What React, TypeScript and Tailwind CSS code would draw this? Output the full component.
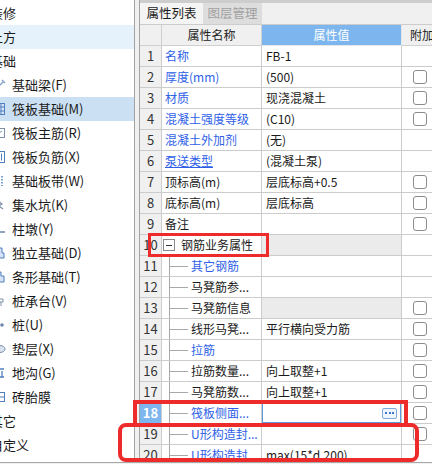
import React from "react";

type TreeItem = {
  label: string;
  level: 0 | 1;
  icon?: string;
  hover?: boolean;
  selected?: boolean;
};

const tree: TreeItem[] = [
  { label: "装修", level: 0 },
  { label: "土方", level: 0, hover: true },
  { label: "基础", level: 0 },
  { label: "基础梁(F)", level: 1, icon: "beam" },
  { label: "筏板基础(M)", level: 1, icon: "raft", selected: true },
  { label: "筏板主筋(R)", level: 1, icon: "main" },
  { label: "筏板负筋(X)", level: 1, icon: "neg" },
  { label: "基础板带(W)", level: 1, icon: "strip" },
  { label: "集水坑(K)", level: 1, icon: "pit" },
  { label: "柱墩(Y)", level: 1, icon: "pier" },
  { label: "独立基础(D)", level: 1, icon: "iso" },
  { label: "条形基础(T)", level: 1, icon: "bar" },
  { label: "桩承台(V)", level: 1, icon: "cap" },
  { label: "桩(U)", level: 1, icon: "pile" },
  { label: "垫层(X)", level: 1, icon: "pad" },
  { label: "地沟(G)", level: 1, icon: "ditch" },
  { label: "砖胎膜", level: 1, icon: "brick" },
  { label: "其它", level: 0 },
  { label: "自定义", level: 0 },
];

type Row = {
  name: string;
  value?: string;
  blue?: boolean;
  link?: boolean;
  check?: boolean;
  child?: boolean;
  group?: boolean;
  gray?: boolean;
  edit?: boolean;
};

const rows: Row[] = [
  { name: "名称", value: "FB-1", blue: true },
  { name: "厚度(mm)", value: "(500)", blue: true, check: true },
  { name: "材质", value: "现浇混凝土", blue: true, check: true },
  { name: "混凝土强度等级", value: "(C10)", blue: true, check: true },
  { name: "混凝土外加剂", value: "(无)", blue: true },
  { name: "泵送类型", value: "(混凝土泵)", blue: true, link: true },
  { name: "顶标高(m)", value: "层底标高+0.5", check: true },
  { name: "底标高(m)", value: "层底标高", check: true },
  { name: "备注", check: true },
  { name: "钢筋业务属性", group: true, gray: true },
  { name: "其它钢筋", child: true, blue: true },
  { name: "马凳筋参...", child: true },
  { name: "马凳筋信息", child: true, gray: true, check: true },
  { name: "线形马凳...", value: "平行横向受力筋", child: true, check: true },
  { name: "拉筋", child: true, blue: true, check: true },
  { name: "拉筋数量...", value: "向上取整+1", child: true, check: true },
  { name: "马凳筋数...", value: "向上取整+1", child: true, check: true },
  { name: "筏板侧面...", child: true, blue: true, check: true, edit: true },
  { name: "U形构造封...", child: true, blue: true, check: true },
  { name: "U形构造封...", value: "max(15*d,200)", child: true, blue: true },
];

function TreeIcon({ kind }: { kind?: string }) {
  const c = "#4f7fbf";
  return (
    <svg width="14" height="14" viewBox="0 0 14 14" className="shrink-0 ml-[-8px]">
      {kind === "beam" && <path d="M3 12 L12 3 M10 2 L13 5" stroke="#8aa6cc" strokeWidth="1.5" fill="none" />}
      {kind === "raft" && (
        <g stroke={c} fill="#dbe7f6">
          <rect x="1.5" y="1.5" width="11" height="11" />
          <path d="M5 1.5V12.5M9 1.5V12.5M1.5 5H12.5M1.5 9H12.5" fill="none" />
        </g>
      )}
      {kind === "main" && (
        <g stroke="#7d8fa8" fill="none">
          <rect x="1.5" y="2.5" width="11" height="9" />
          <path d="M4 9L10 5" />
        </g>
      )}
      {kind === "neg" && (
        <g stroke={c} fill="none">
          <rect x="1.5" y="1.5" width="11" height="11" />
          <path d="M9.5 3.5V10.5" />
        </g>
      )}
      {kind === "strip" && <path d="M10 2V12" stroke={c} strokeDasharray="1.5 1.5" strokeWidth="1.5" />}
      {kind === "pit" && <path d="M6 3L10 6L7 8L11 11" stroke="#7d8fa8" strokeWidth="1.3" fill="none" />}
      {kind === "pier" && <path d="M7 4V10H13" stroke="#6c87ad" strokeWidth="1.5" fill="none" />}
      {kind === "iso" && <path d="M4 2H10V7H12V12H4Z" stroke={c} fill="#d6e4f5" />}
      {kind === "bar" && <path d="M3 2H9V6H12V12H3Z" stroke={c} fill="#d6e4f5" />}
      {kind === "cap" && <path d="M6 5H11V8H6Z M9 8V12" stroke="#7d8fa8" fill="none" />}
      {kind === "pile" && <circle cx="10" cy="7" r="1.8" fill="#6c87ad" />}
      {kind === "pad" && <ellipse cx="8" cy="7" rx="5" ry="3.5" stroke="#7d8fa8" fill="#d9e2ee" />}
      {kind === "ditch" && <path d="M3 3H12M5 3V11H12M3 11H12M10 5V11" stroke={c} strokeWidth="1.3" fill="none" />}
      {kind === "brick" && (
        <g stroke={c} fill="none">
          <rect x="1.5" y="2.5" width="11" height="9" />
          <path d="M7 2.5V11.5M1.5 7H12.5" />
        </g>
      )}
    </svg>
  );
}

function LeftTree() {
  return (
    <div className="w-[135px] shrink-0 bg-white border-r border-[#a3a3a3] pt-[1px] overflow-hidden text-[13px] text-[#1a1a1a]">
      {tree.map((it, i) => (
        <div
          key={i}
          className={`h-[24px] flex items-center whitespace-nowrap ${
            it.selected ? "bg-[#cce0f4]" : it.hover ? "bg-[#e5f1fb]" : ""
          }`}
        >
          {it.level === 0 ? (
            <span className="ml-[-10px]">{it.label}</span>
          ) : (
            <>
              <TreeIcon kind={it.icon} />
              <span className="ml-[6px]">{it.label}</span>
            </>
          )}
        </div>
      ))}
    </div>
  );
}

function Checkbox() {
  return <span className="ml-[11px] w-[14px] h-[14px] rounded-[3px] border border-[#8c8c8c] bg-white" />;
}

function PropRow({ row, index }: { row: Row; index: number }) {
  const num = index + 1;
  return (
    <div className="h-[21px] flex shrink-0">
      <div
        className={`w-[22px] shrink-0 flex items-center justify-center border-r border-b border-[#cccccc] text-[13px] ${
          row.edit ? "bg-[#7db6ee] text-white font-bold" : "bg-[#f0f0f0] text-[#333]"
        }`}
      >
        {num}
      </div>
      <div className="w-[100px] shrink-0 flex items-center border-r border-b border-[#cccccc] bg-white whitespace-nowrap overflow-hidden">
        {row.group && (
          <>
            <span className="ml-[1px] w-[12px] h-[12px] border border-[#8a8a8a] bg-white flex items-center justify-center">
              <span className="w-[6px] h-px bg-[#333]" />
            </span>
            <span className="ml-[6px] text-[#1a1a1a]">{row.name}</span>
          </>
        )}
        {row.child && (
          <>
            <span className="ml-[7px] self-stretch w-px bg-[#a8a8a8]" />
            <span className="w-[18px] h-px bg-[#a8a8a8]" />
            <span className={`ml-[3px] ${row.blue ? "text-[#2f5fe6]" : "text-[#1a1a1a]"}`}>{row.name}</span>
          </>
        )}
        {!row.group && !row.child && (
          <span className={`ml-[3px] ${row.blue ? "text-[#2f5fe6]" : "text-[#1a1a1a]"} ${row.link ? "underline" : ""}`}>
            {row.name}
          </span>
        )}
      </div>
      <div
        className={`w-[140px] shrink-0 flex items-center border-r border-b border-[#cccccc] whitespace-nowrap overflow-hidden ${
          row.gray ? "bg-[#ebebeb]" : "bg-white"
        } ${row.edit ? "ring-1 ring-inset ring-[#5b9ade]" : ""}`}
      >
        {row.value && <span className="ml-[4px] text-[#1a1a1a]">{row.value}</span>}
        {row.edit && (
          <span className="ml-auto mr-[4px] w-[15px] h-[11px] rounded-[2px] border border-[#7ea9da] bg-[#eef5fc] flex items-center justify-center gap-[1.5px]">
            <span className="w-[2px] h-[2px] bg-[#3d78c8]" />
            <span className="w-[2px] h-[2px] bg-[#3d78c8]" />
            <span className="w-[2px] h-[2px] bg-[#3d78c8]" />
          </span>
        )}
      </div>
      <div className="flex-1 flex items-center border-b border-[#cccccc] bg-white">
        {row.check && <Checkbox />}
      </div>
    </div>
  );
}

function RightPanel() {
  return (
    <div className="flex-1 min-w-0 flex flex-col border-l border-[#a3a3a3] bg-[#f0f0f0] overflow-hidden text-[12px]">
      <div className="h-[3px] shrink-0 bg-[#cdcdcd]" />
      <div className="h-[22px] shrink-0 flex border-b border-[#cccccc] bg-[#f0f0f0]">
        <div className="w-[63px] flex items-center justify-center text-[12.5px] text-[#1a1a1a] bg-[#f4f4f4]">
          属性列表
        </div>
        <div className="w-[59px] flex items-center justify-center text-[12.5px] text-[#a0a0a0] bg-[#dddddd]">
          图层管理
        </div>
      </div>
      <div className="h-[21px] shrink-0 flex">
        <div className="w-[22px] shrink-0 border-r border-b border-[#d0d0d0] bg-[#f0f0f0]" />
        <div className="w-[100px] shrink-0 flex items-center justify-center border-r border-b border-[#d0d0d0] bg-[#f0f0f0] text-[#222]">
          属性名称
        </div>
        <div className="w-[140px] shrink-0 flex items-center justify-center border-r border-b border-[#e6e6e6] bg-[#7db6ee] text-white">
          属性值
        </div>
        <div className="flex-1 flex items-center border-b border-[#d0d0d0] bg-[#f0f0f0] pl-[8px] whitespace-nowrap text-[#222]">
          附加
        </div>
      </div>
      {rows.map((r, i) => (
        <PropRow key={i} row={r} index={i} />
      ))}
    </div>
  );
}

export default function App() {
  return (
    <div className="relative w-[432px] h-[464px] overflow-hidden bg-[#f0f0f0] flex flex-col font-['Noto_Sans_CJK_SC','Liberation_Sans',sans-serif]">
      <div className="h-[462px] shrink-0 flex overflow-hidden">
        <LeftTree />
        <div className="w-[4px] shrink-0 bg-[#f0f0f0]" />
        <RightPanel />
      </div>
      <div className="flex-1 border-t border-[#a8a8a8] bg-[#f0f0f0]" />

      {/* red annotation boxes */}
      <div className="absolute left-[148px] top-[233px] w-[121px] h-[24px] border-[3px] border-[#ee2b2b]" />
      <div className="absolute left-[133px] top-[400px] w-[275px] h-[27px] border-[4px] border-[#ee2b2b]" />
      <div className="absolute left-[118px] top-[423px] w-[301px] h-[39px] rounded-[8px] border-[4px] border-[#ee2b2b]" />
    </div>
  );
}
